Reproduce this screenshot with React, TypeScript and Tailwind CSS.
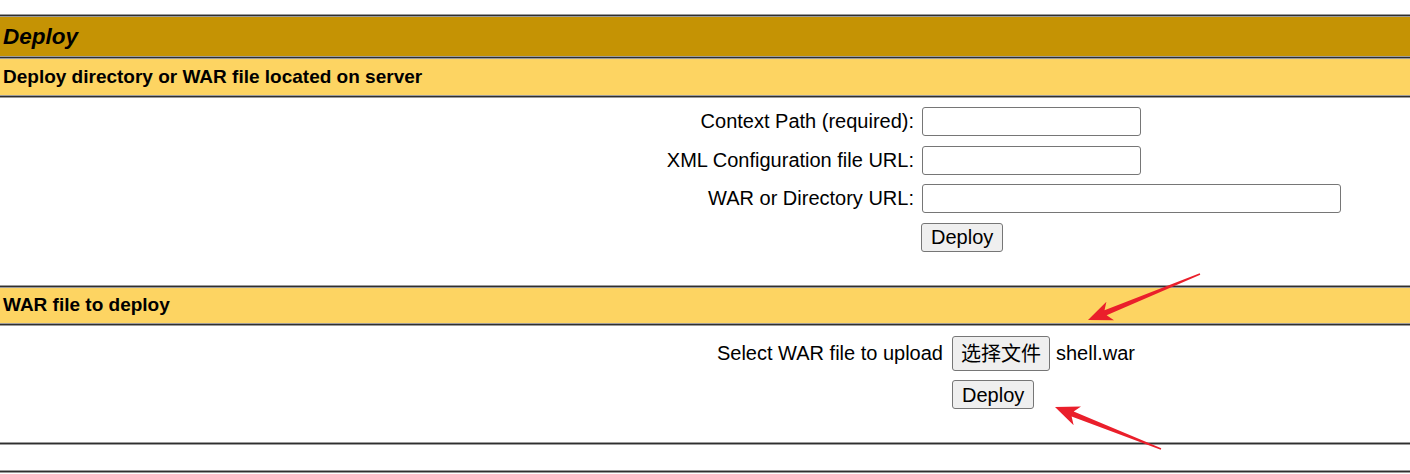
import React from 'react';

const sans = "font-['Liberation_Sans','Noto_Sans_CJK_SC',sans-serif]";

function Rule() {
  return <div className="h-[3px] border-y border-[#9c9c9c] bg-[#2f2f2f]" />;
}

function Input({ wide }: { wide?: boolean }) {
  return (
    <input
      type="text"
      className={`block h-[29px] ${wide ? 'w-[419px]' : 'w-[219px]'} rounded-[3px] border border-[#767676] bg-white px-1 outline-none`}
    />
  );
}

function Btn({ children, tall }: { children: React.ReactNode; tall?: boolean }) {
  return (
    <button
      className={`block ${tall ? 'h-[35px] px-[8px]' : 'h-[29px] px-[9px]'} rounded-[3px] border border-[#767676] bg-[#efefef] text-[20px] leading-none text-black`}
    >
      {children}
    </button>
  );
}

// tapered annotation arrow, tip at (hx, hy)
function arrowPoints(tx: number, ty: number, hx: number, hy: number) {
  const dx = tx - hx;
  const dy = ty - hy;
  const len = Math.hypot(dx, dy);
  const ux = dx / len;
  const uy = dy / len;
  const nx = -uy;
  const ny = ux;
  const hl = 24;
  const bx = hx + ux * hl;
  const by = hy + uy * hl;
  const nb = hx + ux * (hl - 5);
  const nby = hy + uy * (hl - 5);
  const pts: [number, number][] = [
    [hx, hy],
    [bx + nx * 10, by + ny * 10],
    [nb + nx * 2.8, nby + ny * 2.8],
    [tx + nx * 0.7, ty + ny * 0.7],
    [tx - nx * 0.7, ty - ny * 0.7],
    [nb - nx * 2.8, nby - ny * 2.8],
    [bx - nx * 10, by - ny * 10],
  ];
  return pts.map((p) => p.join(',')).join(' ');
}

export default function App() {
  return (
    <div className={`relative h-[474px] w-[1410px] overflow-hidden bg-white text-black ${sans}`}>
      <div className="h-[14px]" />
      <Rule />
      <div className="flex h-[39px] items-center bg-[#c59304] pl-[3px] text-[22.5px] font-bold italic">Deploy</div>
      <Rule />
      <div className="flex h-[36px] items-center bg-[#fdd462] pl-[3px] text-[19px] font-bold">
        Deploy directory or WAR file located on server
      </div>
      <Rule />

      <div className="h-[187px] pt-[9px] text-[20px] leading-[29px]">
        <div className="grid grid-cols-[914px_auto] items-center gap-x-[8px] gap-y-[9.5px]">
          <div className="text-right">Context Path (required):</div>
          <div><Input /></div>
          <div className="text-right">XML Configuration file URL:</div>
          <div><Input /></div>
          <div className="text-right">WAR or Directory URL:</div>
          <div><Input wide /></div>
          <div />
          <div className="-ml-px"><Btn>Deploy</Btn></div>
        </div>
      </div>

      <Rule />
      <div className="flex h-[35px] items-center bg-[#fdd462] pl-[3px] text-[19px] font-bold">WAR file to deploy</div>
      <Rule />

      <div className="h-[116px] pt-[10px] text-[20px] leading-[29px]">
        <div className="grid grid-cols-[943px_auto] items-center gap-x-[9px] gap-y-[9px]">
          <div className="text-right">Select WAR file to upload</div>
          <div className="flex items-center gap-[6px]">
            <Btn tall>选择文件</Btn>
            <span>shell.war</span>
          </div>
          <div />
          <div><Btn>Deploy</Btn></div>
        </div>
      </div>

      <Rule />
      <div className="h-[25px]" />
      <Rule />

      <svg className="pointer-events-none absolute inset-0" width={1410} height={474}>
        <polygon points={arrowPoints(1200, 274, 1088, 320)} fill="#ea1f2b" />
        <polygon points={arrowPoints(1161, 449, 1055, 407)} fill="#ea1f2b" />
      </svg>
    </div>
  );
}
